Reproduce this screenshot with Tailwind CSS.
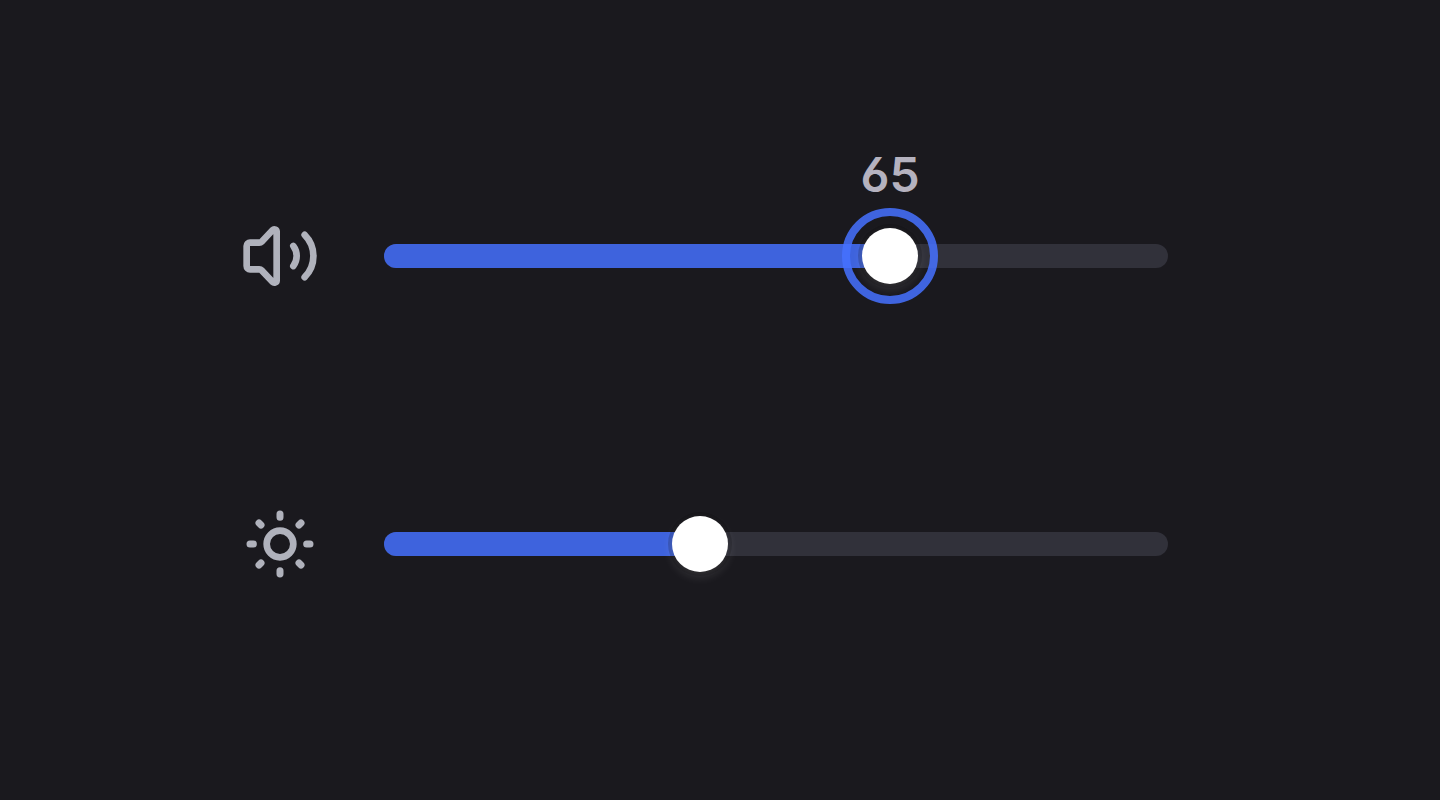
<!DOCTYPE html>
<html lang="en">
<head>
  <meta charset="UTF-8">
  <meta name="viewport" content="width=device-width, initial-scale=1.0">
  <title>Sliders</title>
  <script src="https://cdn.jsdelivr.net/npm/@tailwindcss/browser@4"></script>
</head>
<body class="bg-[#1a191e] font-['Inter',sans-serif]">
  <main class="flex min-h-screen flex-col justify-center gap-52 pl-60 pr-68">
    <!-- Volume -->
    <div class="flex items-center gap-16">
      <label for="volume" class="shrink-0 text-[#b0b2bc]">
        <svg class="size-20" viewBox="0 0 24 24" fill="none" stroke="currentColor" stroke-width="2" stroke-linecap="round" stroke-linejoin="round" role="img" aria-label="Volume">
          <path d="M5.8 8H3a1 1 0 0 0-1 1v6a1 1 0 0 0 1 1h2.8a1 1 0 0 1 .7.3l3.3 3.5A.7.7 0 0 0 11 19.3V4.7A.7.7 0 0 0 9.8 4.2L6.5 7.7a1 1 0 0 1-.7.3Z" />
          <path d="M16 9a5 5 0 0 1 0 6" />
          <path d="M19.4 5.65a9 9 0 0 1 0 12.7" />
        </svg>
      </label>
      <div class="relative h-6 flex-1 rounded-full bg-[#31313a]">
        <div class="h-6 rounded-l-full bg-[#3e63dd]" style="width: 65%"></div>
        <input id="volume" type="range" min="0" max="100" value="65" class="absolute -inset-x-4 -inset-y-4 cursor-pointer appearance-none bg-transparent outline-none [&::-webkit-slider-thumb]:size-14 [&::-webkit-slider-thumb]:appearance-none [&::-webkit-slider-thumb]:rounded-full [&::-webkit-slider-thumb]:bg-white [&::-webkit-slider-thumb]:shadow-[0_4px_12px_#ffffff24,0_0_0_4px_#00000030] [&::-webkit-slider-thumb]:outline-8 [&::-webkit-slider-thumb]:outline-offset-12 [&::-webkit-slider-thumb]:outline-[#4671ffdb]">
        <div class="pointer-events-none absolute inset-x-3 bottom-full">
          <output for="volume" class="absolute bottom-[45px] -translate-x-1/2 text-5xl font-semibold text-[#b5b2bf] [font-feature-settings:'ss01'] [font-variation-settings:'opsz'_32]" style="left: 65%">65</output>
        </div>
      </div>
    </div>

    <!-- Brightness -->
    <div class="flex items-center gap-16">
      <label for="brightness" class="shrink-0 text-[#b0b2bc]">
        <svg class="size-20" viewBox="0 0 24 24" fill="none" stroke="currentColor" stroke-width="2" stroke-linecap="round" stroke-linejoin="round" role="img" aria-label="Brightness">
          <circle cx="12" cy="12" r="4" />
          <path stroke-width="2.1" d="M12 3v1M12 20v1M3 12h1M20 12h1M5.7 5.7l.6.6M17.7 17.7l.6.6M5.7 18.3l.6-.6M17.7 6.3l.6-.6" />
        </svg>
      </label>
      <div class="relative h-6 flex-1 rounded-full bg-[#31313a]">
        <div class="h-6 rounded-l-full bg-[#3e63dd]" style="width: 40%"></div>
        <input id="brightness" type="range" min="0" max="100" value="40" class="absolute -inset-x-4 -inset-y-4 cursor-pointer appearance-none bg-transparent outline-none [&::-webkit-slider-thumb]:size-14 [&::-webkit-slider-thumb]:appearance-none [&::-webkit-slider-thumb]:rounded-full [&::-webkit-slider-thumb]:bg-white [&::-webkit-slider-thumb]:shadow-[0_4px_12px_#ffffff24,0_0_0_4px_#00000030]">
      </div>
    </div>
  </main>

  <script>
    const volume = document.getElementById("volume");
    const brightness = document.getElementById("brightness");
    const output = document.querySelector("output");

    function updateFill(input) {
      input.previousElementSibling.style.width = `${input.value}%`;
    }

    volume.addEventListener("input", () => {
      updateFill(volume);
      output.value = volume.value;
      output.style.left = `${volume.value}%`;
    });

    brightness.addEventListener("input", () => updateFill(brightness));
  </script>
</body>
</html>
